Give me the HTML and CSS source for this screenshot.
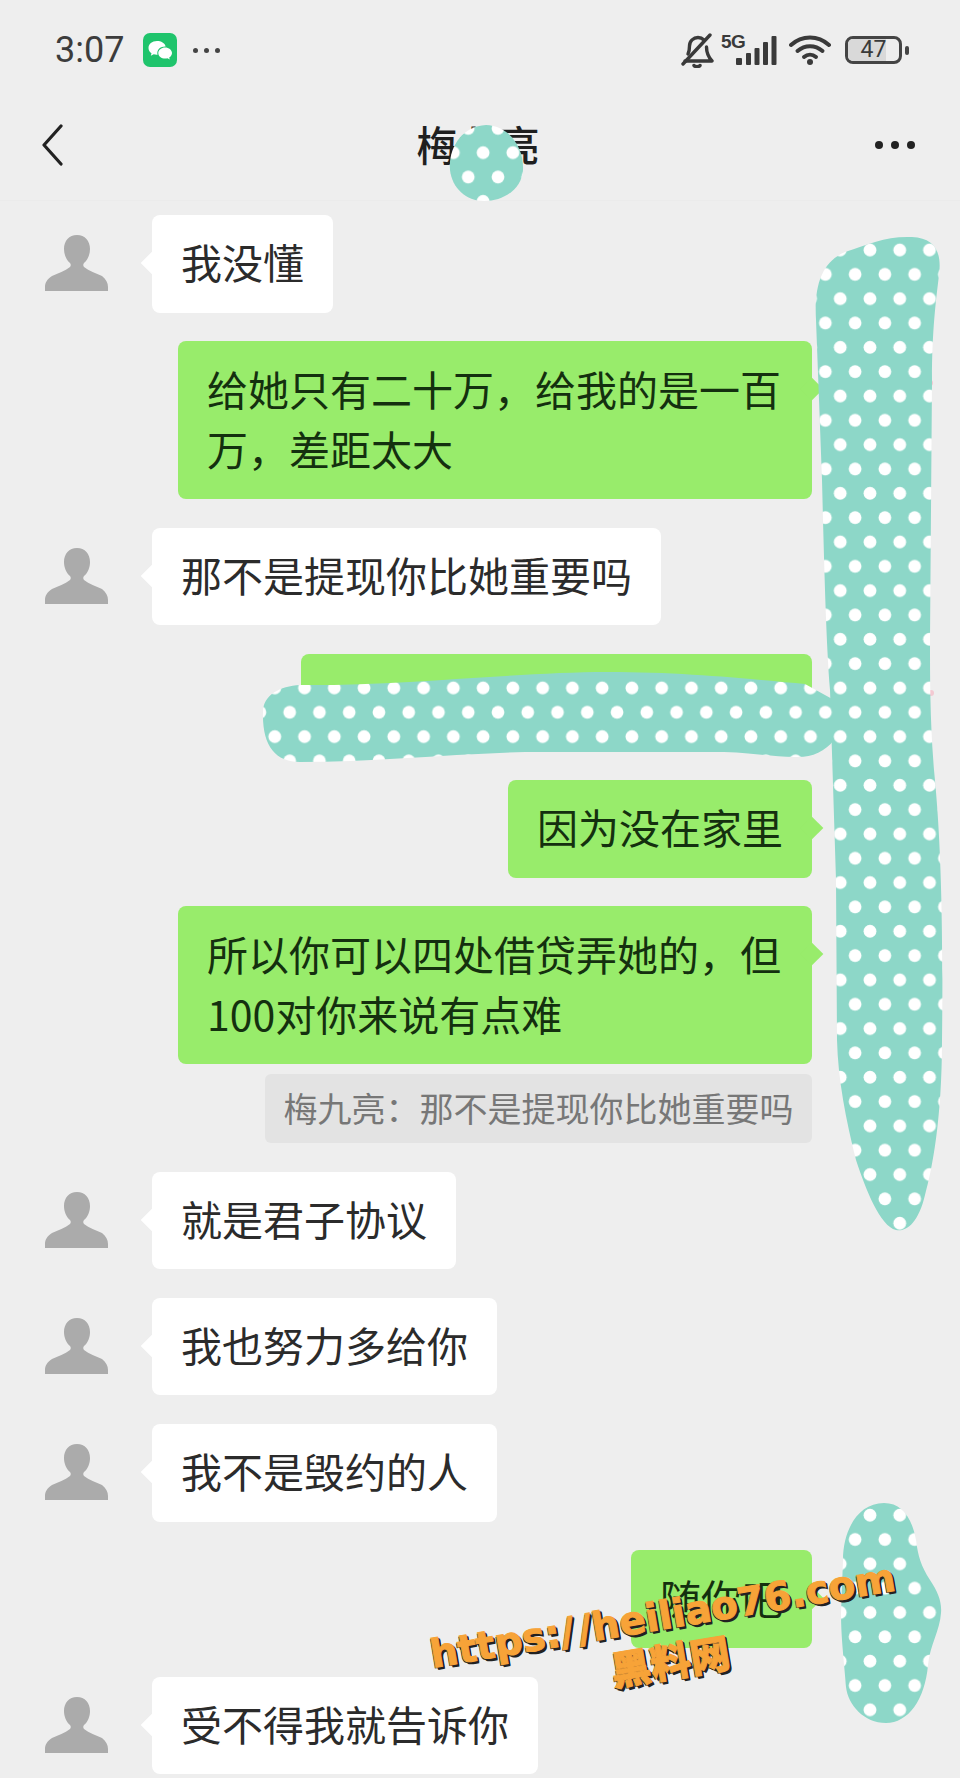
FILE: index.html
```html
<!DOCTYPE html>
<html lang="zh-CN">
<head>
    <meta charset="UTF-8">
    <meta name="viewport" content="width=device-width, initial-scale=1.0">
    <title>梅九亮</title>
    <link rel="stylesheet" href="styles.css">
</head>
<body>

    <div class="phone">

        <div class="status-bar">
            <div class="status-left">
                <span class="time">3:07</span>
                <svg class="wechat-icon" viewBox="0 0 34 34">
                    <rect width="34" height="34" rx="7" fill="#1fc46c"/>
                    <path d="M14 8c-5 0-8.500 3.200-8.500 7 0 2.200 1.100 4 3 5.300l-.7 2.500 2.900-1.500c1 .3 2 .4 3 .4.300 0 .6 0 .9 0-.2-.6-.3-1.200-.3-1.800 0-3.700 3.400-6.500 7.700-6.500h.7C21.700 10 18.200 8 14 8z" fill="#fff"/>
                    <path d="M29 20c0-3.200-3.200-5.600-6.800-5.600-3.900 0-6.900 2.500-6.900 5.600s3 5.600 6.900 5.600c.8 0 1.600-.1 2.300-.3l2.300 1.200-.6-2c1.700-1 2.800-2.600 2.800-4.500z" fill="#fff"/>
                </svg>
                <div class="status-dots"><i></i><i></i><i></i></div>
            </div>
            <div class="status-right">
                <svg class="bell-icon" viewBox="0 0 33 35" fill="none" stroke="#3a3a3a" stroke-width="3.400" stroke-linecap="round" stroke-linejoin="round">
                    <path d="M7 21c1-2 1.500-4 1.500-8 0-5 4-8.500 8.500-8.500 2.500 0 4.500 1 6 2.500"/>
                    <path d="M25.500 14c0 5 1 9 5.500 14H4"/>
                    <path d="M2 31L29 2"/>
                    <path d="M13 32.500c1 1.500 5 1.500 6 0"/>
                </svg>
                <div class="signal">
                    <span class="net-type">5G</span>
                    <svg class="signal-bars" viewBox="0 0 56 30" fill="#3a3a3a">
                        <rect x="15" y="23" width="6" height="7" rx="1"/>
                        <rect x="25" y="18" width="5" height="12" rx="1"/>
                        <rect x="33.500" y="13" width="5" height="17" rx="1"/>
                        <rect x="42" y="7" width="5" height="23" rx="1"/>
                        <rect x="50.500" y="1" width="5" height="29" rx="1"/>
                    </svg>
                </div>
                <svg class="wifi-icon" viewBox="0 0 42 30" fill="none" stroke="#3a3a3a" stroke-width="4" stroke-linecap="round">
                    <path d="M2 10C13 0 29 0 40 10"/>
                    <path d="M8.500 16C16 9.500 26 9.500 33.500 16"/>
                    <path d="M15 22C18.500 19 23.500 19 27 22"/>
                    <circle cx="21" cy="27" r="3" fill="#3a3a3a" stroke="none"/>
                </svg>
                <div class="battery">
                    <div class="battery-body">
                        <div class="battery-fill"></div>
                        <span class="battery-text">47</span>
                    </div>
                    <div class="battery-tip"></div>
                </div>
            </div>
        </div>

        <div class="nav-bar">
            <svg class="back-icon" viewBox="0 0 22 42" fill="none" stroke="#222" stroke-width="3.200" stroke-linecap="round" stroke-linejoin="round">
                <path d="M20 2L3 21l17 19"/>
            </svg>
            <div class="nav-title">梅九亮</div>
            <div class="nav-more"><i></i><i></i><i></i></div>
        </div>

        <div class="chat">

            <div class="row">
                <svg class="avatar" viewBox="0 0 63 56"><use href="#person"/></svg>
                <div class="bubble bubble-white">我没懂</div>
            </div>

            <div class="row row-me">
                <div class="bubble bubble-green">给她只有二十万&#xFF0C;给我的是一百万&#xFF0C;差距太大</div>
            </div>

            <div class="row">
                <svg class="avatar" viewBox="0 0 63 56"><use href="#person"/></svg>
                <div class="bubble bubble-white">那不是提现你比她重要吗</div>
            </div>

            <div class="row row-me">
                <div class="bubble bubble-green bubble-covered"></div>
            </div>

            <div class="row row-me">
                <div class="bubble bubble-green">因为没在家里</div>
            </div>

            <div class="row row-me">
                <div class="message-stack">
                    <div class="bubble bubble-green">所以你可以四处借贷弄她的&#xFF0C;但100对你来说有点难</div>
                    <div class="quote">梅九亮&#xFF1A;那不是提现你比她重要吗</div>
                </div>
            </div>

            <div class="row">
                <svg class="avatar" viewBox="0 0 63 56"><use href="#person"/></svg>
                <div class="bubble bubble-white">就是君子协议</div>
            </div>

            <div class="row">
                <svg class="avatar" viewBox="0 0 63 56"><use href="#person"/></svg>
                <div class="bubble bubble-white">我也努力多给你</div>
            </div>

            <div class="row">
                <svg class="avatar" viewBox="0 0 63 56"><use href="#person"/></svg>
                <div class="bubble bubble-white">我不是毁约的人</div>
            </div>

            <div class="row row-me">
                <div class="bubble bubble-green">随你吧</div>
            </div>

            <div class="row">
                <svg class="avatar" viewBox="0 0 63 56"><use href="#person"/></svg>
                <div class="bubble bubble-white">受不得我就告诉你</div>
            </div>

        </div>

        <!-- scribbles over the names and avatars -->
        <svg class="scribbles" viewBox="0 0 960 1778">
            <defs>
                <path id="person" fill="#ababab" d="M0 52c0-4 2-8 7-11 6-3 13-5 18-9 1-1 1-3 0-4-4-3-6-9-6-14C19 6 24 0 32 0s13 6 13 14c0 5-2 11-6 14-1 1-1 3 0 4 5 4 12 6 18 9 4 3 6 7 6 11v4H0z"/>
                <pattern id="dots" patternUnits="userSpaceOnUse" x="855.120" y="237.840" width="29.760" height="48.660">
                    <rect width="29.760" height="48.660" fill="#8dd7c8"/>
                    <circle cx="14.880" cy="12.160" r="6.400" fill="#fff"/>
                    <circle cx="0" cy="36.490" r="6.400" fill="#fff"/>
                    <circle cx="29.760" cy="36.490" r="6.400" fill="#fff"/>
                </pattern>
            </defs>
            <circle cx="930" cy="383" r="3" fill="#f3c9d2"/>
            <circle cx="931" cy="693" r="3" fill="#f3c9d2"/>
            <circle cx="927" cy="822" r="6" fill="#f3c9d2"/>
            <circle cx="926" cy="822" r="2" fill="#444"/>
            <path fill="url(#dots)" d="M450 170C448 148 462 126 486 125C510 126 524 148 523 170C522 188 505 201 484 201C466 201 452 188 450 170Z"/>
            <path fill="url(#dots)" d="M816 320C814 285 822 262 845 252C870 244 885 236 912 237C935 238 942 252 939 275C936 300 932 330 932 380L930 640C930 680 930 720 934 770C938 810 944 880 942 1040C942 1120 932 1170 925 1195C918 1225 905 1232 896 1230C880 1226 866 1190 856 1160C846 1120 838 1080 837 1040L836 880L830 690C826 640 824 560 822 480Z"/>
            <path fill="url(#dots)" d="M263 712C263 695 280 686 300 685C400 686 520 672 607 672C690 672 760 680 805 684L834 700L834 740C825 752 810 758 795 757C770 757 750 752 717 752L525 752C450 754 370 762 300 762C275 762 262 745 263 712Z"/>
            <path fill="url(#dots)" d="M843 1560C843 1530 858 1503 884 1503C902 1503 912 1518 916 1540C918 1556 921 1566 930 1580C938 1592 942 1602 941 1613C940 1630 930 1645 928 1665C925 1700 908 1723 886 1723C864 1723 848 1705 846 1687C845 1670 841 1640 841 1613Z"/>
        </svg>

        <div class="watermark">
            <div class="watermark-url">https:/ /heiliao76.com</div>
            <div class="watermark-name">黑料网</div>
        </div>

    </div>

</body>
</html>
```

FILE: styles.css
```css
html, body {
    margin: 0;
    padding: 0;
}

body {
    background-color: #eeeeee;
    font-family: "Noto Sans CJK SC", "Noto Sans", sans-serif;
    overflow: hidden;
}

.phone {
    position: relative;
    width: 960px;
    height: 1778px;
    overflow: hidden;
    background-color: #eeeeee;
}

/* status bar */
.status-bar {
    display: flex;
    justify-content: space-between;
    align-items: center;
    height: 100px;
    padding: 0 51px 0 55px;
    box-sizing: border-box;
}

.status-left {
    display: flex;
    align-items: center;
}

.time {
    font-family: Roboto, sans-serif;
    font-size: 36px;
    color: #3c3c3c;
}

.wechat-icon {
    width: 34px;
    height: 34px;
    margin-left: 19px;
}

.status-dots {
    display: flex;
    gap: 6px;
    margin-left: 16px;
}

.status-dots i {
    width: 5px;
    height: 5px;
    border-radius: 50%;
    background-color: #444;
}

.status-right {
    display: flex;
    align-items: center;
}

.bell-icon {
    width: 33px;
    height: 35px;
}

.signal {
    position: relative;
    width: 56px;
    height: 30px;
    margin-left: 7px;
}

.signal-bars {
    display: block;
    width: 56px;
    height: 30px;
}

.net-type {
    position: absolute;
    top: -3px;
    left: 0;
    font-family: "Liberation Sans", sans-serif;
    font-size: 19px;
    line-height: 19px;
    font-weight: bold;
    letter-spacing: -0.5px;
    color: #3a3a3a;
}

.wifi-icon {
    width: 42px;
    height: 30px;
    margin-left: 12px;
}

.battery {
    display: flex;
    align-items: center;
    margin-left: 14px;
}

.battery-body {
    position: relative;
    width: 57px;
    height: 28px;
    box-sizing: border-box;
    border: 3px solid #444;
    border-radius: 8px;
    overflow: hidden;
}

.battery-fill {
    height: 100%;
    width: 74%;
    background-color: #d9d9d9;
}

.battery-text {
    position: absolute;
    top: 0;
    left: 0;
    right: 0;
    text-align: center;
    font-family: Roboto, sans-serif;
    font-size: 23px;
    line-height: 22px;
    color: #3a3a3a;
}

.battery-tip {
    width: 4px;
    height: 9px;
    margin-left: 3px;
    border-radius: 2px;
    background-color: #444;
}

/* nav bar */
.nav-bar {
    display: flex;
    align-items: center;
    height: 101px;
    padding: 0 45px 10px 41px;
    box-sizing: border-box;
    border-bottom: 1px solid #ebebeb;
}

.back-icon {
    width: 22px;
    height: 42px;
}

.nav-title {
    flex: 1;
    padding-left: 18px;
    margin-bottom: 5px;
    text-align: center;
    font-size: 41px;
    line-height: 60px;
    font-weight: 500;
    color: #1f1f1f;
}

.nav-more {
    display: flex;
    gap: 8px;
}

.nav-more i {
    width: 8px;
    height: 8px;
    border-radius: 50%;
    background-color: #222;
}

/* messages */
.chat {
    display: flex;
    flex-direction: column;
    gap: 28.75px;
    padding-top: 14px;
}

.row {
    display: flex;
    align-items: flex-start;
    padding-left: 45px;
}

.row-me {
    justify-content: flex-end;
    padding-left: 0;
    padding-right: 148px;
}

.avatar {
    width: 63px;
    height: 56px;
    margin-top: 20px;
    margin-right: 44px;
    flex-shrink: 0;
}

.bubble {
    position: relative;
    max-width: 634px;
    padding: 16.25px 29px 21.25px;
    box-sizing: border-box;
    font-size: 41px;
    line-height: 60px;
    border-radius: 8px;
}

.bubble::before {
    content: "";
    position: absolute;
    top: 40px;
    width: 16px;
    height: 16px;
    transform: rotate(45deg);
    background-color: inherit;
}

.bubble-white {
    background-color: #ffffff;
    color: #2b2b2b;
}

.bubble-white::before {
    left: -8px;
}

.bubble-green {
    background-color: #98ec6b;
    color: #14300f;
}

.bubble-green::before {
    right: -8px;
}

.bubble-covered {
    width: 511px;
    height: 97.5px;
}

.message-stack {
    display: flex;
    flex-direction: column;
    align-items: flex-end;
    gap: 10px;
}

.quote {
    padding: 12.5px 18.5px;
    font-size: 34px;
    line-height: 44px;
    color: #777777;
    background-color: #e3e3e3;
    border-radius: 6px;
}

/* overlays */
.scribbles {
    position: absolute;
    top: 0;
    left: 0;
    width: 960px;
    height: 1778px;
    pointer-events: none;
}

.watermark {
    position: absolute;
    top: 1592px;
    left: 406px;
    width: 520px;
    text-align: center;
    color: #f7a338;
    font-weight: 900;
    line-height: 47px;
    transform: rotate(-9.5deg);
    text-shadow: 1px 1px 0 #222, 2px 2px 0 #222, -1px 1px 0 #222, 2px 3px 0 #222;
    -webkit-text-stroke: 1px #f7a338;
    white-space: nowrap;
}

.watermark-url {
    font-family: "DejaVu Sans", sans-serif;
    font-weight: bold;
    font-size: 39px;
    word-spacing: -10px;
}

.watermark-name {
    font-size: 40px;
    line-height: 42px;
}
```
